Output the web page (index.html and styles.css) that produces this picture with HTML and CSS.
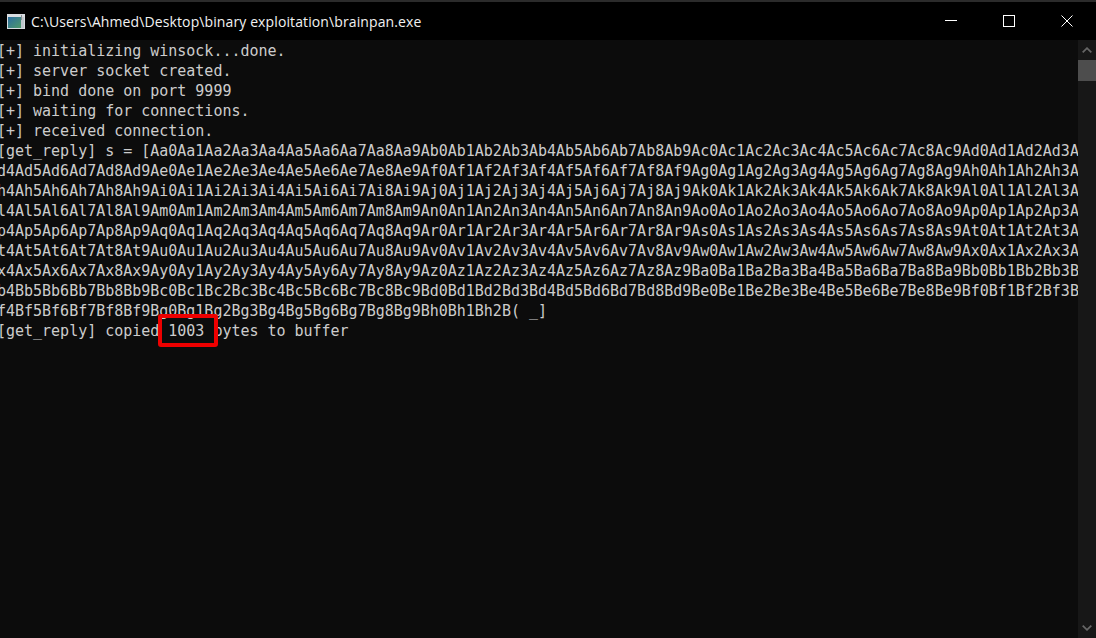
FILE: index.html
```html
<!DOCTYPE html>
<html lang="en">
<head>
<meta charset="utf-8">
<title>brainpan.exe</title>
<link rel="stylesheet" href="styles.css">
</head>
<body>
<div class="window">
  <div class="topline"></div>
  <header class="titlebar">
    <svg class="appicon" width="18" height="15" viewBox="0 0 18 15">
      <defs><linearGradient id="g" x1="0" y1="0" x2="1" y2="1"><stop offset="0" stop-color="#2c6da0"/><stop offset="1" stop-color="#4f9a6a"/></linearGradient></defs>
      <rect x="0" y="0" width="18" height="15" fill="#d8dce0"/>
      <rect x="1" y="3" width="13" height="11" fill="url(#g)"/>
      <rect x="14" y="3" width="3" height="11" fill="#bfc6cc"/>
      <rect x="14" y="1" width="1" height="5" fill="#8a9096"/>
    </svg>
    <span class="title">C:\Users\Ahmed\Desktop\binary exploitation\brainpan.exe</span>
    <div class="controls">
      <span class="ctrl"><svg width="12" height="12" viewBox="0 0 12 12"><path d="M0 5.5H12" stroke="#fff" fill="none"/></svg></span>
      <span class="ctrl"><svg width="12" height="12" viewBox="0 0 12 12"><rect x="0.5" y="0.5" width="11" height="11" stroke="#fff" fill="none"/></svg></span>
      <span class="ctrl"><svg width="12" height="12" viewBox="0 0 12 12"><path d="M0.5 0.5L11.5 11.5M11.5 0.5L0.5 11.5" stroke="#fff" fill="none"/></svg></span>
    </div>
  </header>
  <div class="console">
    <main class="output">
      <div class="line">[+] initializing winsock...done.</div>
      <div class="line">[+] server socket created.</div>
      <div class="line">[+] bind done on port 9999</div>
      <div class="line">[+] waiting for connections.</div>
      <div class="line">[+] received connection.</div>
      <div class="line">[get_reply] s = [Aa0Aa1Aa2Aa3Aa4Aa5Aa6Aa7Aa8Aa9Ab0Ab1Ab2Ab3Ab4Ab5Ab6Ab7Ab8Ab9Ac0Ac1Ac2Ac3Ac4Ac5Ac6Ac7Ac8Ac9Ad0Ad1Ad2Ad3A</div>
      <div class="line">d4Ad5Ad6Ad7Ad8Ad9Ae0Ae1Ae2Ae3Ae4Ae5Ae6Ae7Ae8Ae9Af0Af1Af2Af3Af4Af5Af6Af7Af8Af9Ag0Ag1Ag2Ag3Ag4Ag5Ag6Ag7Ag8Ag9Ah0Ah1Ah2Ah3A</div>
      <div class="line">h4Ah5Ah6Ah7Ah8Ah9Ai0Ai1Ai2Ai3Ai4Ai5Ai6Ai7Ai8Ai9Aj0Aj1Aj2Aj3Aj4Aj5Aj6Aj7Aj8Aj9Ak0Ak1Ak2Ak3Ak4Ak5Ak6Ak7Ak8Ak9Al0Al1Al2Al3A</div>
      <div class="line">l4Al5Al6Al7Al8Al9Am0Am1Am2Am3Am4Am5Am6Am7Am8Am9An0An1An2An3An4An5An6An7An8An9Ao0Ao1Ao2Ao3Ao4Ao5Ao6Ao7Ao8Ao9Ap0Ap1Ap2Ap3A</div>
      <div class="line">p4Ap5Ap6Ap7Ap8Ap9Aq0Aq1Aq2Aq3Aq4Aq5Aq6Aq7Aq8Aq9Ar0Ar1Ar2Ar3Ar4Ar5Ar6Ar7Ar8Ar9As0As1As2As3As4As5As6As7As8As9At0At1At2At3A</div>
      <div class="line">t4At5At6At7At8At9Au0Au1Au2Au3Au4Au5Au6Au7Au8Au9Av0Av1Av2Av3Av4Av5Av6Av7Av8Av9Aw0Aw1Aw2Aw3Aw4Aw5Aw6Aw7Aw8Aw9Ax0Ax1Ax2Ax3A</div>
      <div class="line">x4Ax5Ax6Ax7Ax8Ax9Ay0Ay1Ay2Ay3Ay4Ay5Ay6Ay7Ay8Ay9Az0Az1Az2Az3Az4Az5Az6Az7Az8Az9Ba0Ba1Ba2Ba3Ba4Ba5Ba6Ba7Ba8Ba9Bb0Bb1Bb2Bb3B</div>
      <div class="line">b4Bb5Bb6Bb7Bb8Bb9Bc0Bc1Bc2Bc3Bc4Bc5Bc6Bc7Bc8Bc9Bd0Bd1Bd2Bd3Bd4Bd5Bd6Bd7Bd8Bd9Be0Be1Be2Be3Be4Be5Be6Be7Be8Be9Bf0Bf1Bf2Bf3B</div>
      <div class="line">f4Bf5Bf6Bf7Bf8Bf9Bg0Bg1Bg2Bg3Bg4Bg5Bg6Bg7Bg8Bg9Bh0Bh1Bh2B( _]</div>
      <div class="line">[get_reply] copied 1003 bytes to buffer</div>
      <div class="highlight"></div>
    </main>
    <aside class="scrollbar">
      <svg class="chev" width="10" height="6" viewBox="0 0 10 6"><path d="M0.7 5.3L5 1.2L9.3 5.3" stroke="#666" stroke-width="1.8" fill="none"/></svg>
      <div class="thumb"></div>
      <div class="spacer"></div>
      <svg class="chev" width="10" height="6" viewBox="0 0 10 6"><path d="M0.7 0.7L5 4.8L9.3 0.7" stroke="#666" stroke-width="1.8" fill="none"/></svg>
    </aside>
  </div>
</div>
</body>
</html>
```
FILE: styles.css
```css
html, body {
  margin: 0;
  padding: 0;
  background: #0c0c0c;
}
.window {
  width: 1096px;
  height: 638px;
  display: flex;
  flex-direction: column;
  overflow: hidden;
}
.topline {
  height: 2px;
  background: #2b2b2b;
  flex: none;
}
.titlebar {
  height: 38px;
  flex: none;
  background: #000;
  display: flex;
  align-items: center;
  padding-left: 7px;
  color: #fff;
}
.appicon { margin-right: 6px; }
.title {
  font-family: "Open Sans", "Liberation Sans", sans-serif;
  font-size: 14px;
  letter-spacing: 0.11px;
  color: #f2f2f2;
}
.controls {
  margin-left: auto;
  display: flex;
}
.ctrl {
  width: 58px;
  height: 38px;
  display: flex;
  align-items: center;
  justify-content: center;
}
.console {
  flex: 1;
  display: flex;
  min-height: 0;
}
.output {
  flex: 1;
  position: relative;
  overflow: hidden;
  padding-top: 1px;
  color: #cccccc;
  font-family: "DejaVu Sans Mono", monospace;
  font-size: 15px;
  line-height: 20px;
}
.line {
  height: 20px;
  white-space: pre;
  letter-spacing: -0.015px;
  margin-left: -3px;
}
.highlight {
  position: absolute;
  left: 158px;
  top: 274px;
  width: 52px;
  height: 25px;
  border: 4px solid #ee0000;
  border-radius: 3px;
}
.scrollbar {
  width: 18px;
  flex: none;
  background: #171717;
  display: flex;
  flex-direction: column;
  align-items: center;
}
.chev {
  flex: none;
  margin: 7px 0;
}
.thumb {
  width: 18px;
  height: 21px;
  background: #4d4d4d;
  flex: none;
}
.spacer { flex: 1; }
```
